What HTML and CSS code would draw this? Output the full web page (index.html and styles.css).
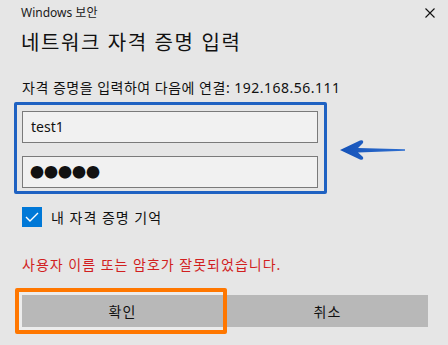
FILE: index.html
```html
<!DOCTYPE html>
<html lang="ko">
<head>
    <meta charset="UTF-8">
    <meta name="viewport" content="width=device-width, initial-scale=1.0">
    <title>Windows 보안</title>
    <link rel="stylesheet" href="styles.css">
</head>
<body>
    <div class="dialog">
        <div class="caption">
            <span class="caption-title">Windows 보안</span>
            <span class="close-btn">
                <svg width="10" height="10" viewBox="0 0 10 10">
                    <path d="M0.5 0.5 L9.5 9.5 M9.5 0.5 L0.5 9.5" stroke="#111" stroke-width="1.1" fill="none"/>
                </svg>
            </span>
        </div>

        <h1>네트워크 자격 증명 입력</h1>
        <p class="connect-text">자격 증명을 입력하여 다음에 연결: 192.168.56.111</p>

        <div class="credential-row">
            <div class="credential-box">
                <div class="field">test1</div>
                <div class="field password">●●●●●</div>
            </div>
            <svg class="arrow" width="70" height="26" viewBox="0 0 70 26">
                <defs>
                    <linearGradient id="arrowFill" x1="0" y1="0" x2="1" y2="0">
                        <stop offset="0" stop-color="#1552b8"/>
                        <stop offset="1" stop-color="#2f6fd0"/>
                    </linearGradient>
                </defs>
                <path d="M1 13 L21 3.5 Q25 2.5 24 6 L19 11 L66 12.3 L66 13.8 L19 15.5 L24 20 Q25 23.5 21 22.5 Z" fill="url(#arrowFill)"/>
            </svg>
        </div>

        <label class="remember">
            <span class="checkbox">
                <svg width="14" height="10" viewBox="0 0 14 10">
                    <path d="M1 5 L5 9 L13 1" stroke="#fff" stroke-width="1.4" fill="none"/>
                </svg>
            </span>
            <span>내 자격 증명 기억</span>
        </label>

        <p class="error-text">사용자 이름 또는 암호가 잘못되었습니다.</p>

        <div class="buttons">
            <button class="btn btn-ok">확인</button>
            <button class="btn">취소</button>
        </div>
    </div>
</body>
</html>
```

FILE: styles.css
```css
* {
    margin: 0;
    padding: 0;
    box-sizing: border-box;
}

body {
    background-color: #e6e6e6;
    font-family: "Noto Sans", "Noto Sans CJK KR", sans-serif;
    color: #000;
    width: 448px;
    height: 345px;
    overflow: hidden;
}

.dialog {
    padding: 0 20px 0 22px;
}

.caption {
    display: flex;
    justify-content: space-between;
    align-items: center;
    height: 24px;
    margin-left: -1px;
}

.caption-title {
    font-size: 12px;
    color: #1a1a1a;
}

.close-btn {
    display: flex;
    margin-right: -7px;
    margin-top: 1px;
}

h1 {
    font-size: 20px;
    font-weight: 400;
    line-height: 28px;
    letter-spacing: 1.6px;
    margin-top: 5px;
    margin-left: -1px;
    color: #111;
}

.connect-text {
    font-size: 14px;
    line-height: 20px;
    letter-spacing: 0.5px;
    margin-top: 21px;
    color: #111;
}

.credential-row {
    display: flex;
    align-items: center;
    margin-top: 4px;
    margin-left: -8px;
}

.credential-box {
    width: 313px;
    border: 3px solid #1f62c2;
    border-radius: 2px;
    padding: 6px 6px 3px 5px;
    display: flex;
    flex-direction: column;
    gap: 13px;
}

.field {
    height: 32px;
    background: #f1f1f1;
    border: 1px solid #7a7a7a;
    font-size: 14px;
    line-height: 30px;
    padding-left: 8px;
    color: #111;
}

.field.password {
    font-size: 14px;
    letter-spacing: 0;
    padding-left: 7px;
}

.arrow {
    margin-left: 12px;
    margin-top: 4px;
}

.remember {
    display: flex;
    align-items: center;
    gap: 9px;
    margin-top: 13px;
    font-size: 14px;
    letter-spacing: 1px;
    color: #111;
}

.checkbox {
    width: 20px;
    height: 20px;
    background: #0078d7;
    display: flex;
    align-items: center;
    justify-content: center;
}

.error-text {
    color: #d11f1f;
    font-size: 14px;
    line-height: 20px;
    letter-spacing: 1px;
    margin-top: 28px;
}

.buttons {
    display: flex;
    gap: 4px;
    margin-top: 20px;
}

.btn {
    width: 201px;
    height: 32px;
    background: #b8b8b8;
    border: none;
    font-family: inherit;
    font-size: 14px;
    letter-spacing: 1px;
    color: #111;
    position: relative;
}

.btn-ok {
    box-shadow: 0 0 0 3px #ececec;
}

.btn-ok::after {
    content: "";
    position: absolute;
    left: -7px;
    right: -4px;
    top: -7px;
    bottom: -7px;
    border: 4px solid #ff7700;
    border-radius: 2px;
}
```
